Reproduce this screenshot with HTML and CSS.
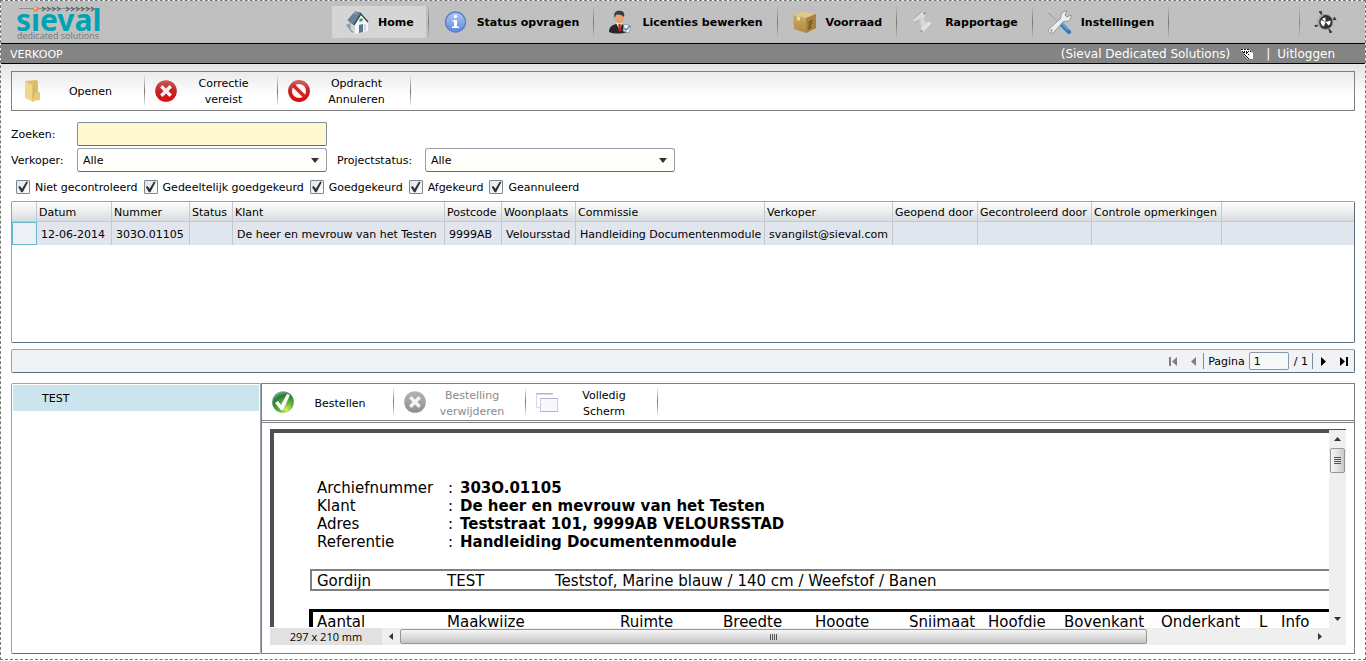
FILE: index.html
```html
<!DOCTYPE html>
<html lang="nl">
<head>
<meta charset="utf-8">
<title>Sieval - Verkoop</title>
<link rel="stylesheet" href="styles.css">
</head>
<body>
<div class="page">
  <header class="header">
    <svg class="logo" width="90" height="40" viewBox="0 0 90 40" role="img" aria-label="Sieval dedicated solutions">
      <path d="M3 6.500h80" stroke="#8a9094" stroke-width="1" fill="none"/>
      <path d="M26 5l3 2-3 2M31 5l3 2-3 2M36 5l3 2-3 2M41 5l3 2-3 2M50 5l3 2-3 2M55 5l3 2-3 2M60 5l3 2-3 2M65 5l3 2-3 2M70 5l3 2-3 2M75 5l3 2-3 2" stroke="#5f686d" stroke-width="1.400" fill="none"/>
      <text class="logo-name" x="0" y="29">sıeval</text>
      <circle cx="20" cy="7" r="2.600" fill="#f08a4b"/><circle cx="19.300" cy="6.300" r="1" fill="#ffd9b8"/>
      <text class="logo-sub" x="1" y="37">dedicated solutions</text>
    </svg>
    <nav class="nav">
      <button class="nav-item active" type="button">
        <svg width="24" height="24" viewBox="0 0 24 24"><path d="M1 15l6-3 3 9-3 2z" fill="#9a9a9a"/><path d="M5 11l5 4v8l-4-3z" fill="#cfd4d8"/><path d="M10 14l6-9 7 8v8l-13 3z" fill="#f4f6f7"/><path d="M3 10l7-8 6 1-7 12z" fill="#66839c" stroke="#3d566b" stroke-width=".7"/><path d="M9 1.500h3v3H9z" fill="#8a9aa6"/><path d="M9 15l7-11 7 8" fill="none" stroke="#33444f" stroke-width="1.300"/><path d="M14 15l4-1v8l-4 1z" fill="#58798f"/><path d="M14.500 9l3-1v3l-3 1z" fill="#3f9a66"/><path d="M20 14v7" stroke="#aeb5ba"/></svg>
        <span>Home</span>
      </button>
      <button class="nav-item" type="button">
        <svg width="24" height="24" viewBox="0 0 24 24"><defs><linearGradient id="info" x2="0" y2="1"><stop stop-color="#b3caf6"/><stop offset="1" stop-color="#5c86dc"/></linearGradient></defs><circle cx="11.500" cy="12" r="10" fill="url(#info)" stroke="#5b7fc4" stroke-width="1.400"/><circle cx="11.500" cy="6.500" r="1.800" fill="#fff"/><path d="M8.500 10h4.500v6.500h2V18h-7v-1.500h2v-5h-1.500z" fill="#fff"/></svg>
        <span>Status opvragen</span>
      </button>
      <button class="nav-item" type="button">
        <svg width="24" height="24" viewBox="0 0 24 24"><path d="M0 22c0-5 3-7 7-8h5c4 1 6 4 6 8-5 2-13 2-18 0z" fill="#262729"/><path d="M7 13h6l-2 8z" fill="#f6f3ef"/><path d="M9.500 14h2l.8 6-1.500 2-1.500-2z" fill="#c0262b"/><ellipse cx="10.500" cy="8" rx="4.400" ry="5.800" fill="#e6a36f"/><path d="M5.500 8C4 2 8 .5 11 .8c4 .2 5 3 4 6.200-2-2-5-3-8-2z" fill="#3d3d3f"/><path d="M15 14l7 2-2 7-6-2z" fill="#eef1f4" stroke="#7d858c" stroke-width=".7"/><path d="M15 18l2 2 4-4" stroke="#53779e" stroke-width="1.300" fill="none"/></svg>
        <span>Licenties bewerken</span>
      </button>
      <button class="nav-item" type="button">
        <svg width="24" height="24" viewBox="0 0 24 24"><defs><linearGradient id="boxside" x2="0" y2="1"><stop stop-color="#d3b26b"/><stop offset="1" stop-color="#b08a3e"/></linearGradient></defs><path d="M0 5l10-3.500L23 4v14l-10 5L1 19z" fill="url(#boxside)"/><path d="M0 5l10-3.500L23 4l-10 4z" fill="#e0c78b"/><path d="M13 8l10-4v14l-10 5z" fill="#a8823c"/><path d="M4 6l3 1v4l-3-1z" fill="#e9d6a2"/><path d="M15 13l5-3M15 16l5-3M15 19l4-2M18 10l-2 9" stroke="#6a5023" stroke-width="1"/></svg>
        <span>Voorraad</span>
      </button>
      <button class="nav-item" type="button">
        <svg width="24" height="24" viewBox="0 0 24 24"><defs><linearGradient id="scroll" x2="1" y2="0"><stop stop-color="#a9a9a9"/><stop offset=".5" stop-color="#dadada"/><stop offset="1" stop-color="#c9c9c9"/></linearGradient></defs><path d="M3 9l8-7 3 2-3 6 7 3-8 7-2-6-5-1z" fill="url(#scroll)"/><path d="M3 10l9-7" stroke="#dcdcdc" stroke-width="3" stroke-linecap="round"/><path d="M1.500 9l8-7.500" stroke="#a2a2a2" stroke-width=".8"/><circle cx="12.500" cy="3.300" r="1.200" fill="#8f8f8f"/><path d="M10 20.500l7-7" stroke="#e2e2e2" stroke-width="3.400" stroke-linecap="round"/><circle cx="9.500" cy="21" r="1.200" fill="#999"/></svg>
        <span>Rapportage</span>
      </button>
      <button class="nav-item" type="button">
        <svg width="24" height="24" viewBox="0 0 24 24"><path d="M1 2l10 10" stroke="#8c9298" stroke-width="2"/><path d="M1 1l9 10" stroke="#eef1f3"/><path d="M12 13l9 9" stroke="#2e78c0" stroke-width="4" stroke-linecap="round"/><path d="M12 12l8 8" stroke="#66a8e6" stroke-width="1.300"/><path d="M1 19L13 8c-1-4 2-7 6-7l-2 4 2 2 4-2c1 4-3 8-7 6L5 23c-3 1-6-2-4-4z" fill="#eceff1" stroke="#858d94" stroke-width=".9"/><circle cx="3.500" cy="20.500" r="1" fill="#777"/></svg>
        <span>Instellingen</span>
      </button>
    </nav>
    <button class="help" type="button" aria-label="Ondersteuning">
      <svg width="24" height="24" viewBox="0 0 24 24"><path d="M6 2l3 4M21 9l-4 1M2 16l5-2M17 22l-3-4" stroke="#303030" stroke-width="1.400"/><path d="M5 2h3M20 7l2 3M1 15l1 2M15 22h3" stroke="#303030" stroke-width="1.300"/><circle cx="11.500" cy="12" r="7.500" fill="#333" stroke="#a5a5a5" stroke-width="1"/><path d="M9 5a7.500 7.500 0 0 0-3 12" fill="none" stroke="#aaa" stroke-width="2"/><path d="M11.500 12L7 10a5 5 0 0 0 3 6.500zM11.500 12V7.500a4.500 4.500 0 0 0-3.500 1.500zM11.500 12l5-1.500a5 5 0 0 1-2 5z" fill="#fff"/></svg>
    </button>
  </header>
  <div class="titlebar">
    <h1>VERKOOP</h1>
    <span class="account">(Sieval Dedicated Solutions)</span>
    <svg class="hand" width="14" height="12" viewBox="0 0 14 12"><path d="M1 1h7l5 4v6H8L4 7l1-1-4-3z" fill="#fff"/><path d="M1 1.500h2M4 1.500h2M7 1.500h2M2 3.500h1M4 3.500h1M6 3.500h1M8 3.500h1M3 4.500h2M6 4.500h2M10 3.500h1M4 6.500h1M6 5.500h1M8 6.500h1M5 7.500h1M6 8.500h1M7 9.500h1M8 10.500h1" stroke="#111" stroke-width="1"/></svg>
    <span class="bar">|</span>
    <a class="logout" href="#">Uitloggen</a>
  </div>

  <main class="content">
    <div class="toolbar">
      <button class="tool" type="button">
        <svg width="22" height="24" viewBox="0 0 22 24"><path d="M3 2l12-1 1 2v16l-5 1z" fill="#ddbd67"/><path d="M3 2l8 4v17l-8-4z" fill="#f1d68b"/><path d="M12 14l6-1v8l-6 1z" fill="#e7c974"/><path d="M11 6v17" stroke="#c9a750" stroke-width=".8"/></svg>
        <span>Openen</span>
      </button>
      <button class="tool" type="button">
        <svg width="22" height="24" viewBox="0 0 22 24"><defs><linearGradient id="red" x2="0" y2="1"><stop stop-color="#cc5a59"/><stop offset=".5" stop-color="#c42322"/><stop offset="1" stop-color="#dc0c0c"/></linearGradient></defs><circle cx="11" cy="12" r="10.800" fill="url(#red)"/><path d="M7.500 8.500l7 7M14.500 8.500l-7 7" stroke="#f4f4f4" stroke-width="3.400" stroke-linecap="square"/></svg>
        <span>Correctie<br>vereist</span>
      </button>
      <button class="tool" type="button">
        <svg width="22" height="24" viewBox="0 0 22 24"><circle cx="11" cy="12" r="9" fill="#f7f7f7" stroke="url(#red)" stroke-width="3.800"/><path d="M5 6l12 12" stroke="#c92a29" stroke-width="3.600"/></svg>
        <span>Opdracht<br>Annuleren</span>
      </button>
    </div>

    <form class="filters">
      <label for="zoeken">Zoeken:</label>
      <input class="search" id="zoeken" type="text">
      <label for="verkoper">Verkoper:</label>
      <div class="combo"><select id="verkoper"><option>Alle</option></select><svg width="8" height="5" viewBox="0 0 8 5"><path d="M0 0h8L4 5z" fill="#333"/></svg></div>
      <label class="status-label" for="projectstatus">Projectstatus:</label>
      <div class="combo"><select id="projectstatus"><option>Alle</option></select><svg width="8" height="5" viewBox="0 0 8 5"><path d="M0 0h8L4 5z" fill="#333"/></svg></div>
    </form>
    <div class="checks">
      <label><input type="checkbox" checked><span>Niet gecontroleerd</span></label>
      <label><input type="checkbox" checked><span>Gedeeltelijk goedgekeurd</span></label>
      <label><input type="checkbox" checked><span>Goedgekeurd</span></label>
      <label><input type="checkbox" checked><span>Afgekeurd</span></label>
      <label><input type="checkbox" checked><span>Geannuleerd</span></label>
    </div>

    <div class="grid">
      <table>
        <colgroup><col class="w25"><col class="w75"><col class="w78"><col class="w43"><col class="w212"><col class="w57"><col class="w74"><col class="w189"><col class="w128"><col class="w85"><col class="w114"><col class="w130"><col></colgroup>
        <thead><tr><th></th><th>Datum</th><th>Nummer</th><th>Status</th><th>Klant</th><th>Postcode</th><th>Woonplaats</th><th>Commissie</th><th>Verkoper</th><th>Geopend door</th><th>Gecontroleerd door</th><th>Controle opmerkingen</th><th></th></tr></thead>
        <tbody><tr><td class="selector"></td><td>12-06-2014</td><td>303O.01105</td><td></td><td>De heer en mevrouw van het Testen</td><td>9999AB</td><td>Veloursstad</td><td>Handleiding Documentenmodule</td><td>svangilst@sieval.com</td><td></td><td></td><td></td><td></td></tr></tbody>
      </table>
    </div>

    <div class="pager">
      <button class="wide" type="button" disabled aria-label="Eerste pagina"><svg width="9" height="9" viewBox="0 0 9 9"><path d="M0 0h2v9H0zM8 0v9L3 4.500z"/></svg></button>
      <button type="button" disabled aria-label="Vorige pagina"><svg width="9" height="9" viewBox="0 0 9 9"><path d="M7 0v9L2 4.500z"/></svg></button>
      <span class="rule first"></span>
      <label for="pagina">Pagina</label>
      <input id="pagina" type="text" value="1">
      <span class="total">/ 1</span>
      <span class="rule"></span>
      <button type="button" aria-label="Volgende pagina"><svg width="9" height="9" viewBox="0 0 9 9"><path d="M2 0v9l5-4.500z"/></svg></button>
      <button type="button" aria-label="Laatste pagina"><svg width="9" height="9" viewBox="0 0 9 9"><path d="M7 0h2v9H7zM1 0v9l5-4.500z"/></svg></button>
    </div>

    <div class="split">
      <aside class="list"><button type="button" class="list-item">TEST</button></aside>
      <section class="detail">
        <div class="toolbar small">
          <button class="tool" type="button">
            <svg width="22" height="24" viewBox="0 0 22 24"><defs><radialGradient id="green" cx=".65" cy=".85" r=".9"><stop stop-color="#d9ee63"/><stop offset=".4" stop-color="#5fae3a"/><stop offset=".75" stop-color="#2a7c3a"/><stop offset="1" stop-color="#8dbf9a"/></radialGradient></defs><circle cx="11" cy="12" r="10.800" fill="url(#green)"/><path d="M3 13l3-2 3 4 6-11 3 1-7 15H9z" fill="#fff"/></svg>
            <span>Bestellen</span>
          </button>
          <button class="tool" type="button" disabled>
            <svg width="22" height="24" viewBox="0 0 22 24"><defs><linearGradient id="grey" x2="0" y2="1"><stop stop-color="#b5b5b5"/><stop offset="1" stop-color="#8e8e8e"/></linearGradient></defs><circle cx="11" cy="12" r="10.800" fill="url(#grey)"/><path d="M7.500 8.500l7 7M14.500 8.500l-7 7" stroke="#f4f4f4" stroke-width="3.400" stroke-linecap="square"/></svg>
            <span>Bestelling<br>verwijderen</span>
          </button>
          <button class="tool" type="button">
            <svg width="22" height="24" viewBox="0 0 22 24"><path d="M.5 17.500v-14H17M.5 17.500H4M0 4.500h17" fill="none" stroke="#d6d6e6"/><path d="M0 3.500h17" stroke="#b4b4cf"/><rect x="4.500" y="8.500" width="17" height="13" fill="#f8f8fc" stroke="#d0d0e2"/><path d="M4 8.500h18M4 21.500h18" stroke="#b4b4cf"/></svg>
            <span>Volledig<br>Scherm</span>
          </button>
        </div>
        <div class="viewer">
          <div class="paper">
            <dl class="meta">
              <dt>Archiefnummer</dt><dd>303O.01105</dd>
              <dt>Klant</dt><dd>De heer en mevrouw van het Testen</dd>
              <dt>Adres</dt><dd>Teststraat 101, 9999AB VELOURSSTAD</dd>
              <dt>Referentie</dt><dd>Handleiding Documentenmodule</dd>
            </dl>
            <div class="product"><span>Gordijn</span><span>TEST</span><span>Teststof, Marine blauw / 140 cm / Weefstof / Banen</span></div>
            <div class="specs"><span>Aantal</span><span>Maakwijze</span><span>Ruimte</span><span>Breedte</span><span>Hoogte</span><span>Snijmaat</span><span>Hoofdje</span><span>Bovenkant</span><span>Onderkant</span><span>L</span><span>Info</span></div>
          </div>
          <div class="vscroll">
            <button type="button" aria-label="Omhoog"><svg width="7" height="4" viewBox="0 0 7 4"><path d="M0 4h7L3.500 0z" fill="#333"/></svg></button>
            <div class="vthumb"><i></i><i></i><i></i><i></i></div>
            <button class="end" type="button" aria-label="Omlaag"><svg width="7" height="4" viewBox="0 0 7 4"><path d="M0 0h7L3.500 4z" fill="#333"/></svg></button>
          </div>
          <div class="hrow">
            <span class="size">297 x 210 mm</span>
            <div class="hscroll">
              <button type="button" aria-label="Naar links"><svg width="4" height="7" viewBox="0 0 4 7"><path d="M4 0v7L0 3.500z" fill="#333"/></svg></button>
              <div class="htrack"><div class="hthumb"><i></i><i></i><i></i><i></i></div></div>
              <button type="button" aria-label="Naar rechts"><svg width="4" height="7" viewBox="0 0 4 7"><path d="M0 0v7l4-3.500z" fill="#333"/></svg></button>
            </div>
          </div>
          <div class="corner"></div>
        </div>
      </section>
    </div>
  </main>
</div>
</body>
</html>
```
FILE: styles.css
```css
* { box-sizing: border-box; }
html { height: 100%; background: #fff; }
body {
  margin: 0;
  height: 100%;
  font: 11px/16px Verdana, "DejaVu Sans", sans-serif;
  color: #000;
}
button, input, select { font: inherit; color: inherit; margin: 0; }
button { background: none; border: 0; padding: 0; }
svg { display: block; flex: none; }

.page {
  display: flex;
  flex-direction: column;
  min-height: calc(100vh - 1px);
  border: 1px dashed #777;
}

/* Header */
.header {
  display: flex;
  align-items: center;
  height: 43px;
  background: #c0c0c0;
  border-bottom: 1px solid #000;
}
.logo { margin-left: 15px; overflow: visible; }
.logo-name { font: bold 30px "Noto Sans", sans-serif; fill: #00a3b4; }
.logo-sub { font: 9px "Open Sans", sans-serif; fill: #6f777b; }
.nav { display: flex; height: 40px; margin-left: 223px; }
.nav-item {
  display: flex;
  align-items: center;
  gap: 9px;
  padding: 0 14px 0 15px;
  font-weight: bold;
  white-space: nowrap;
}
.nav-item span { padding-top: 1px; }
.nav-item, .tool {
  border-right: 1px solid;
  border-image: linear-gradient(transparent 10%, #777 50%, transparent 90%) 1;
}
.nav-item.active {
  padding-left: 16px;
  background: linear-gradient(#d5d5d5, #d5d5d5) 3px 4px / calc(100% - 5px) 32px no-repeat;
}
.help {
  display: flex;
  align-items: center;
  height: 40px;
  margin-left: auto;
  padding: 0 27px 0 14px;
  border-left: 1px solid;
  border-image: linear-gradient(transparent 10%, #888 50%, transparent 90%) 1;
}

.titlebar {
  display: flex;
  align-items: center;
  height: 20px;
  padding: 0 30px 0 9px;
  background: #848484;
  border-bottom: 1px solid #000;
  color: #fff;
  font-size: 12px;
  white-space: nowrap;
}
.titlebar h1 { margin: 0 auto 0 0; padding-top: 2px; font: 11px/16px Verdana, "DejaVu Sans", sans-serif; }
.hand { margin-left: 10px; }
.bar { margin-left: 12px; }
.logout { margin-left: 7px; color: #fff; text-decoration: none; }

/* Content */
.content {
  display: flex;
  flex: 1;
  flex-direction: column;
  padding: 7px 10px 5px;
  background: linear-gradient(#e4e4e4, #fff 32px);
}
.toolbar { display: flex; height: 40px; border: 1px solid #808080; }
.tool {
  display: flex;
  align-items: center;
  width: 133px;
  padding: 0 7px 0 10px;
}
.tool span { flex: 1; padding-top: 2px; }
.tool:disabled { color: #8a8a8a; }

.filters {
  display: grid;
  grid-template-columns: 66px 250px 98px 250px;
  grid-auto-rows: 24px;
  row-gap: 2px;
  align-items: center;
  margin-top: 11px;
}
.filters label { padding-top: 1px; }
.search {
  grid-column: 2 / 5;
  width: 250px;
  height: 24px;
  padding: 0 5px;
  background: #fff8d0;
  border: 1px solid #7f8d99;
  border-bottom-color: #5b6e80;
  border-radius: 2px;
}
.filters .status-label { padding-left: 10px; }
.combo { position: relative; }
.combo select {
  appearance: none;
  display: block;
  width: 100%;
  height: 24px;
  padding: 1px 5px 0;
  background: linear-gradient(#fff, #fffef5);
  border: 1px solid #96a1ac;
  border-bottom-color: #5b6e80;
  border-radius: 3px;
}
.combo svg { position: absolute; right: 8px; top: 10px; pointer-events: none; }

.checks { display: flex; gap: 6px; margin: 6px 0 5px 5px; }
.checks label { display: flex; align-items: center; gap: 4px; white-space: nowrap; }
.checks span { padding: 2px 0 0 1px; }
.checks label + label span { padding-left: 0; }
.checks input {
  appearance: none;
  width: 14px;
  height: 14px;
  background: linear-gradient(135deg, #e0e4ea, #fff);
  border: 1px solid #7b8997;
  border-radius: 1px;
}
.checks label + label input { margin-right: 1px; }
.checks input:checked::before {
  content: "";
  display: block;
  width: 12px;
  height: 12px;
  background: #333;
  clip-path: polygon(10% 50%, 25% 42%, 42% 64%, 78% 5%, 92% 8%, 48% 94%, 36% 94%);
}

.grid {
  height: 142px;
  border: 1px solid #98a5b1;
  border-right-color: #5b6e80;
  border-bottom-color: #5b6e80;
  border-radius: 2px;
  background: #fff;
  overflow: hidden;
}
.grid table { width: 100%; table-layout: fixed; border-collapse: separate; border-spacing: 0; }
.grid th, .grid td {
  padding: 2px 0 0;
  border-right: 1px solid #c5c9cc;
  text-align: left;
  font-weight: normal;
  white-space: nowrap;
}
.grid th { height: 20px; padding-left: 2px; background: linear-gradient(#fcfdfd, #eef0f0 45%, #d8dcdf); border-bottom: 1px solid #c5c9cc; }
.grid th { line-height: 15px; }
.grid td { height: 23px; padding-left: 4px; background: #e1e5ed; }
.grid th:last-child, .grid td:last-child { border-right: 0; }
.grid .selector { background: #edf0f4; border: 1px solid #65b9c9; }
.w25 { width: 25px; }
.w75 { width: 75px; }
.w78 { width: 78px; }
.w43 { width: 43px; }
.w212 { width: 212px; }
.w57 { width: 57px; }
.w74 { width: 74px; }
.w189 { width: 189px; }
.w128 { width: 128px; }
.w85 { width: 85px; }
.w114 { width: 114px; }
.w130 { width: 130px; }

.pager {
  display: flex;
  align-items: center;
  justify-content: flex-end;
  height: 24px;
  margin-top: 6px;
  padding-right: 1px;
  background: #f1f2f5;
  border: 1px solid #98a5b1;
  border-bottom-color: #5b6e80;
  border-right-color: #5b6e80;
  border-radius: 2px;
}
.pager button { display: flex; width: 20px; padding-top: 1px; justify-content: center; fill: #000; }
.pager button:disabled { fill: #808080; }
.pager .rule { width: 1px; height: 16px; margin-left: 4px; background: #7d8b99; }
.pager .first { margin-left: 0; }
.pager label, .total { padding-top: 1px; }
.pager label { margin: 0 4px; }
.pager input {
  width: 40px;
  height: 18px;
  padding: 1px 4px 0;
  border: 1px solid #8a98a6;
  border-radius: 2px;
  background: #f7f9f9;
}
.total { margin-left: 5px; }

/* Lower panes */
.split { display: flex; flex: 1; margin-top: 10px; }
.list {
  width: 250px;
  padding: 1px;
  border: 1px solid #98a5b1;
  border-bottom-color: #5b6e80;
  border-radius: 2px;
  background: #fff;
}
.list-item {
  width: 100%;
  height: 26px;
  padding: 1px 0 0 29px;
  background: #cce4ee;
  border-radius: 1px;
  text-align: left;
}
.detail {
  display: flex;
  flex: 1;
  flex-direction: column;
  min-width: 0;
  border: 1px solid #808080;
}
.toolbar.small { height: 37px; border-width: 0 0 1px; }
.small .tool { width: 132px; }
.small .tool span { padding-top: 3px; }

.viewer {
  display: grid;
  grid-template-columns: 1fr 17px;
  grid-template-rows: 1fr 17px;
  flex: 1;
  margin-top: 1px;
  padding: 6px 8px 8px;
  border-top: 1px solid #808080;
}
.paper {
  min-width: 0;
  height: 198px;
  padding: 46px 0 0 35px;
  overflow: hidden;
  border: solid #505050;
  border-width: 4px 0 0 4px;
  font-size: 15px;
  line-height: 18px;
  white-space: nowrap;
}
.meta { display: grid; grid-template-columns: 131px 1fr; margin: 0 0 0 8px; }
.meta dt, .meta dd { margin: 0; }
.meta dd { font-weight: bold; }
.meta dd::before { content: ":"; display: inline-block; width: 12px; font-weight: normal; }
.product {
  display: grid;
  grid-template-columns: 130px 108px 1fr;
  margin: 18px 0 0 1px;
  padding-left: 5px;
  border: 2px solid #808080;
  border-right: 0;
}
.specs {
  display: grid;
  grid-template-columns: 130px 173px 103px 92px 94px 79px 76px 97px 98px 22px 1fr;
  margin-top: 18px;
  padding-left: 4px;
  border: solid #000;
  border-width: 3px 0 0 4px;
}
.product span, .specs span { padding-top: 2px; line-height: 16px; }
.vscroll {
  display: flex;
  flex-direction: column;
  padding: 0 1px;
  background: #efefef;
  border-top: 1px solid #505050;
}
.vscroll button { display: grid; height: 18px; place-items: center; }
.vscroll .end { margin-top: auto; }
.vthumb, .hthumb {
  display: flex;
  align-items: center;
  justify-content: center;
  gap: 1px;
  border: 1px solid #979797;
  border-radius: 2px;
}
.vthumb { flex-direction: column; height: 25px; background: linear-gradient(90deg, #f5f5f5, #e2e2e2 50%, #c8c8cb); }
.vthumb i { width: 7px; height: 1px; background: #555; }
.hrow { display: flex; background: #efefef; }
.size {
  width: 112px;
  background: #e1e1e1;
  font: 11px/17px "Open Sans", sans-serif;
  text-align: center;
}
.hscroll { display: flex; flex: 1; padding: 1px 0; }
.hscroll button { display: grid; width: 18px; place-items: center; }
.htrack { flex: 1; }
.hthumb { width: 82%; height: 15px; background: linear-gradient(#f5f5f5, #dedede 50%, #c4c4c8); }
.hthumb i { width: 1px; height: 6px; background: #555; }
.corner { background: #efefef; }
```
